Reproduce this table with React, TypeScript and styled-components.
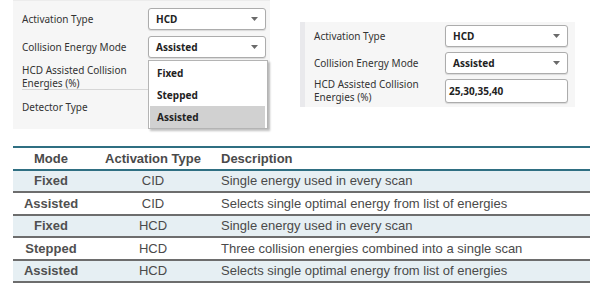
import styled, {createGlobalStyle} from "styled-components";

const GlobalStyle = createGlobalStyle`
    html, body {
        margin: 0;
        padding: 0;
        background: #ffffff;
    }
`

type ModeRow = {
    mode: string,
    activation: string,
    description: string,
}

const modeRows: ModeRow[] = [
    {mode: "Fixed", activation: "CID", description: "Single energy used in every scan"},
    {mode: "Assisted", activation: "CID", description: "Selects single optimal energy from list of energies"},
    {mode: "Fixed", activation: "HCD", description: "Single energy used in every scan"},
    {mode: "Stepped", activation: "HCD", description: "Three collision energies combined into a single scan"},
    {mode: "Assisted", activation: "HCD", description: "Selects single optimal energy from list of energies"},
]

const Caret = () => <svg width="7" height="4" viewBox="0 0 7 4">
    <path d="M0 0 L7 0 L3.5 4 Z" fill="#6a6a6a"/>
</svg>

const Select = (props: { value: string }) => <StyledSelect>
    <SelectValue>{props.value}</SelectValue>
    <Caret/>
</StyledSelect>

const App = () => {
    return <StyledPage>
        <GlobalStyle/>
        <TopRow>
            <LeftPanel>
                <FieldRow>
                    <FieldLabel $width={126}>Activation Type</FieldLabel>
                    <Select value="HCD"/>
                </FieldRow>
                <FieldRow>
                    <FieldLabel $width={126}>Collision Energy Mode</FieldLabel>
                    <Select value="Assisted"/>
                </FieldRow>
                <DividedRow>
                    <FieldLabel $width={126}>HCD Assisted Collision<br/>Energies (%)</FieldLabel>
                </DividedRow>
                <FieldRow>
                    <FieldLabel $width={126}>Detector Type</FieldLabel>
                </FieldRow>
                <OptionList>
                    <OptionItem>Fixed</OptionItem>
                    <OptionItem>Stepped</OptionItem>
                    <OptionItem $selected>Assisted</OptionItem>
                </OptionList>
            </LeftPanel>
            <RightPanel>
                <FieldRow>
                    <FieldLabel $width={131}>Activation Type</FieldLabel>
                    <Select value="HCD"/>
                </FieldRow>
                <FieldRow>
                    <FieldLabel $width={131}>Collision Energy Mode</FieldLabel>
                    <Select value="Assisted"/>
                </FieldRow>
                <TallRow>
                    <FieldLabel $width={131}>HCD Assisted Collision<br/>Energies (%)</FieldLabel>
                    <TextField>25,30,35,40</TextField>
                </TallRow>
            </RightPanel>
        </TopRow>
        <ModeTable>
            <HeaderRow>
                <HeadCell $align="center">Mode</HeadCell>
                <HeadCell $align="center">Activation Type</HeadCell>
                <HeadCell $align="left">Description</HeadCell>
            </HeaderRow>
            {modeRows.map((row, i) =>
                <BodyRow key={i} $shaded={i % 2 === 0}>
                    <ModeCell>{row.mode}</ModeCell>
                    <BodyCell $align="center">{row.activation}</BodyCell>
                    <BodyCell $align="left">{row.description}</BodyCell>
                </BodyRow>
            )}
        </ModeTable>
    </StyledPage>
}

const StyledPage = styled.div`
    width: 606px;
    height: 287px;
    display: flex;
    flex-direction: column;
    overflow: hidden;
`

const TopRow = styled.div`
    display: flex;
    align-items: flex-start;
    height: 146px;
`

const LeftPanel = styled.div`
    position: relative;
    margin-left: 13px;
    width: 257px;
    height: 129px;
    background: #f6f6f6;
    border-top: 1px solid #ececec;
    box-sizing: border-box;
    padding: 7px 4px 0 9px;
    display: flex;
    flex-direction: column;
    gap: 6px;
`

const RightPanel = styled.div`
    margin-left: 30px;
    margin-top: 22px;
    width: 275px;
    height: 85px;
    background: #f6f6f6;
    border-left: 5px solid #e9e9ec;
    box-sizing: border-box;
    padding: 3px 7px 0 9px;
    display: flex;
    flex-direction: column;
    gap: 5px;
`

const FieldRow = styled.div`
    display: flex;
    align-items: center;
    height: 22px;
`

const TallRow = styled(FieldRow)`
    height: 24px;
`

const DividedRow = styled(FieldRow)`
    box-sizing: border-box;
    height: 26px;
    width: 126px;
    border-bottom: 1px solid #d6d6d6;
`

const FieldLabel = styled.span<{ $width: number }>`
    width: ${props => props.$width}px;
    flex-shrink: 0;
    font-family: "Noto Sans", "Open Sans", sans-serif;
    font-size: 10px;
    line-height: 13px;
    color: #333333;
`

const StyledSelect = styled.div`
    flex: 1;
    height: 22px;
    box-sizing: border-box;
    background: #ffffff;
    border: 1px solid #acacac;
    border-radius: 3px;
    box-shadow: 0 1px 1px rgba(0, 0, 0, 0.12);
    display: flex;
    align-items: center;
    justify-content: space-between;
    padding: 0 7px 0 7px;
`

const SelectValue = styled.span`
    font-family: "Noto Sans", "Open Sans", sans-serif;
    font-size: 10px;
    font-weight: bold;
    color: #222222;
`

const TextField = styled(StyledSelect)`
    height: 24px;
    font-family: "Noto Sans", "Open Sans", sans-serif;
    font-size: 10px;
    font-weight: bold;
    color: #222222;
    padding-left: 3px;
`

const OptionList = styled.div`
    position: absolute;
    left: 135px;
    top: 59px;
    width: 120px;
    height: 69px;
    box-sizing: border-box;
    background: #ffffff;
    border: 1px solid #b4b4b4;
    box-shadow: 2px 2px 2px rgba(0, 0, 0, 0.25);
    padding: 1px 2px 0 1px;
    display: flex;
    flex-direction: column;
`

const OptionItem = styled.div<{ $selected?: boolean }>`
    height: 22px;
    display: flex;
    align-items: center;
    padding-left: 7px;
    background: ${props => props.$selected ? "#d1d1d1" : "transparent"};
    font-family: "Noto Sans", "Open Sans", sans-serif;
    font-size: 10px;
    font-weight: bold;
    color: #222222;
`

const ModeTable = styled.div`
    margin-left: 13px;
    width: 577px;
    border-top: 2px solid #2f6f82;
    display: flex;
    flex-direction: column;
`

const columns = `76px 128px 1fr`

const HeaderRow = styled.div`
    display: grid;
    grid-template-columns: ${columns};
    height: 20.5px;
    align-items: center;
    border-bottom: 2px solid #2f6f82;
`

const BodyRow = styled.div<{ $shaded: boolean }>`
    display: grid;
    grid-template-columns: ${columns};
    height: 20.5px;
    align-items: center;
    background: ${props => props.$shaded ? "#e6eff3" : "#ffffff"};
    border-bottom: 2px solid #6d6d6d;
`

const HeadCell = styled.div<{ $align: string }>`
    text-align: ${props => props.$align};
    padding-left: ${props => props.$align === "left" ? "4px" : "0"};
    font-family: "Liberation Sans", Arial, sans-serif;
    font-size: 13px;
    font-weight: bold;
    color: #4a4a4a;
`

const BodyCell = styled.div<{ $align: string }>`
    text-align: ${props => props.$align};
    padding-left: ${props => props.$align === "left" ? "4px" : "0"};
    font-family: "Liberation Sans", Arial, sans-serif;
    font-size: 13px;
    color: #4a4a4a;
`

const ModeCell = styled.div`
    text-align: center;
    font-family: "Liberation Sans", Arial, sans-serif;
    font-size: 13px;
    font-weight: bold;
    color: #505050;
`

export default App
